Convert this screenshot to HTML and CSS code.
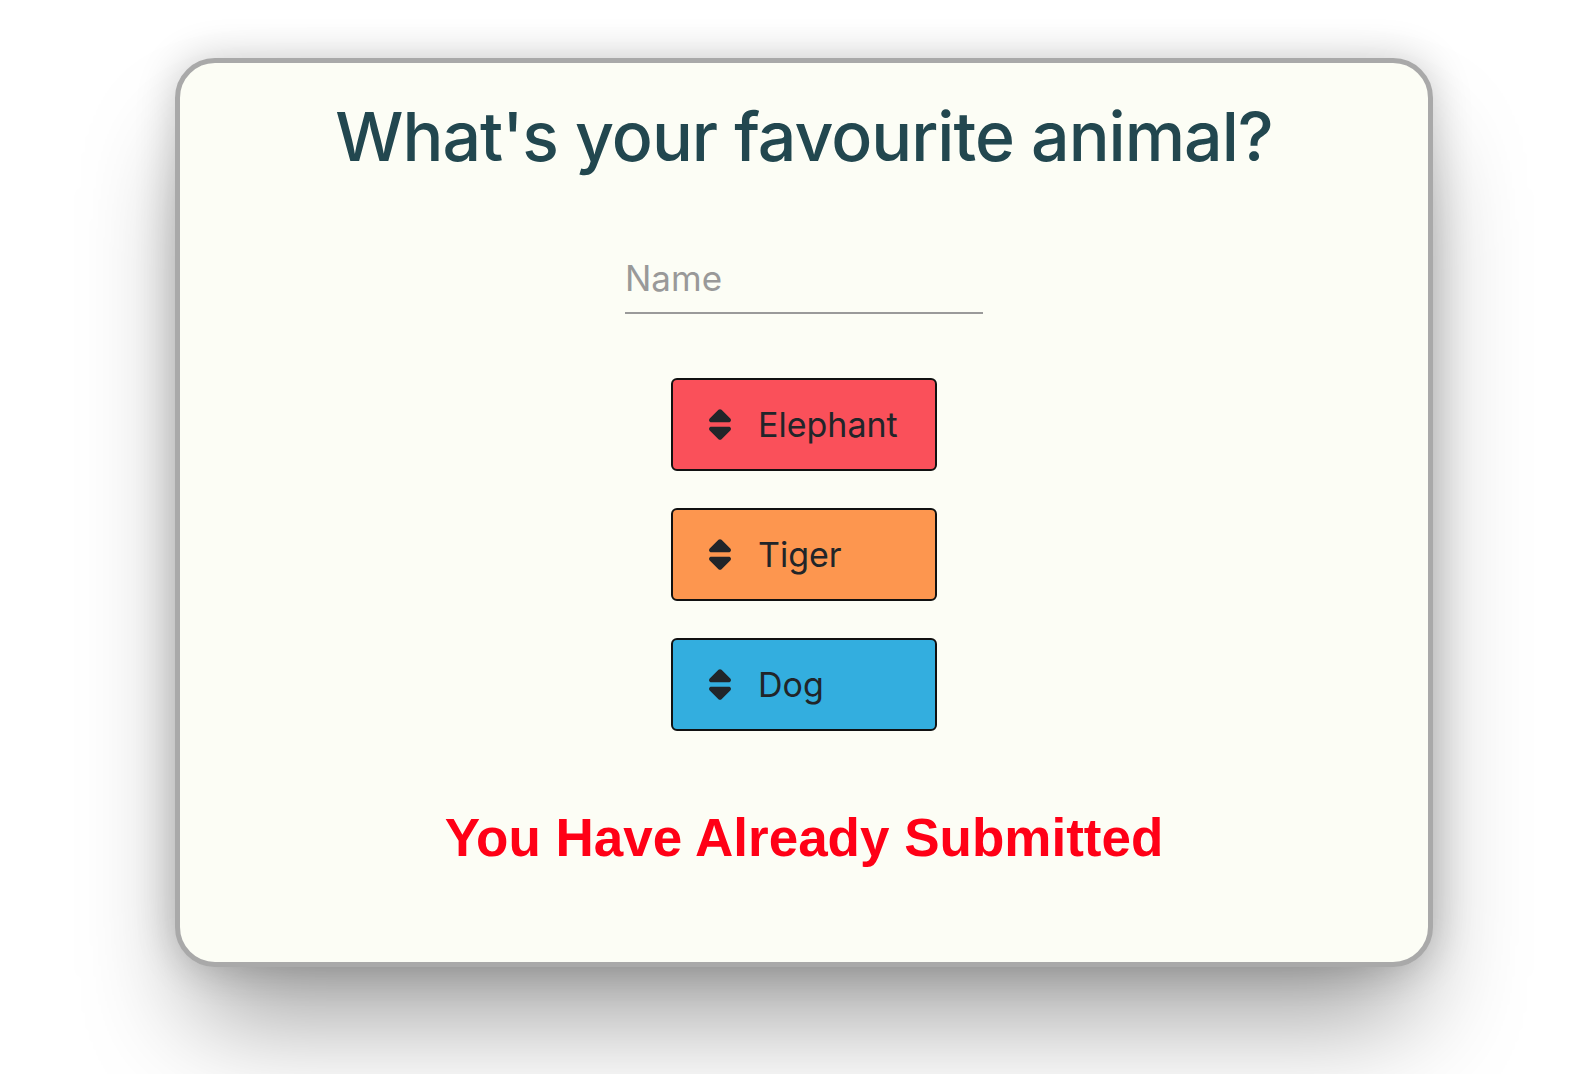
FILE: index.html
```html
<!DOCTYPE html>
<html lang="en">
<head>
<meta charset="utf-8">
<title>Favourite animal</title>
<link rel="stylesheet" href="styles.css">
</head>
<body>
<div class="page">
  <main class="card">
    <h1 class="title">What's your favourite animal?</h1>
    <input class="name-input" type="text" placeholder="Name">
    <div class="options">
      <button class="option option-elephant" type="button">
        <svg class="sort-icon" viewBox="0 0 320 512" aria-hidden="true"><path d="M137.4 41.4c12.5-12.5 32.8-12.5 45.3 0l128 128c9.2 9.2 11.9 22.9 6.9 34.9s-16.6 19.8-29.6 19.8H32c-12.9 0-24.6-7.8-29.6-19.8s-2.2-25.7 6.9-34.9l128-128zm0 429.3l-128-128c-9.2-9.2-11.9-22.9-6.9-34.9s16.6-19.8 29.6-19.8H288c12.9 0 24.6 7.8 29.6 19.8s2.2 25.7-6.9 34.9l-128 128c-12.5 12.5-32.8 12.5-45.3 0z"/></svg>
        <span class="option-label">Elephant</span>
      </button>
      <button class="option option-tiger" type="button">
        <svg class="sort-icon" viewBox="0 0 320 512" aria-hidden="true"><path d="M137.4 41.4c12.5-12.5 32.8-12.5 45.3 0l128 128c9.2 9.2 11.9 22.9 6.9 34.9s-16.6 19.8-29.6 19.8H32c-12.9 0-24.6-7.8-29.6-19.8s-2.2-25.7 6.9-34.9l128-128zm0 429.3l-128-128c-9.2-9.2-11.9-22.9-6.9-34.9s16.6-19.8 29.6-19.8H288c12.9 0 24.6 7.8 29.6 19.8s2.2 25.7-6.9 34.9l-128 128c-12.5 12.5-32.8 12.5-45.3 0z"/></svg>
        <span class="option-label">Tiger</span>
      </button>
      <button class="option option-dog" type="button">
        <svg class="sort-icon" viewBox="0 0 320 512" aria-hidden="true"><path d="M137.4 41.4c12.5-12.5 32.8-12.5 45.3 0l128 128c9.2 9.2 11.9 22.9 6.9 34.9s-16.6 19.8-29.6 19.8H32c-12.9 0-24.6-7.8-29.6-19.8s-2.2-25.7 6.9-34.9l128-128zm0 429.3l-128-128c-9.2-9.2-11.9-22.9-6.9-34.9s16.6-19.8 29.6-19.8H288c12.9 0 24.6 7.8 29.6 19.8s2.2 25.7-6.9 34.9l-128 128c-12.5 12.5-32.8 12.5-45.3 0z"/></svg>
        <span class="option-label">Dog</span>
      </button>
    </div>
    <p class="message">You Have Already Submitted</p>
  </main>
</div>
</body>
</html>
```
FILE: styles.css
```css
html, body {
  margin: 0;
  padding: 0;
  background: #ffffff;
}

.page {
  padding: 58px 145px 0 175px;
  height: 1074px;
  box-sizing: border-box;
  overflow: hidden;
}

.card {
  box-sizing: border-box;
  width: 1258px;
  background: #fcfdf5;
  border: 5px solid #a9a9a9;
  border-radius: 40px;
  box-shadow: 0 0 40px rgba(0, 0, 0, 0.2), 0 70px 110px -20px rgba(0, 0, 0, 0.38);
  padding: 33px 0 94px;
  display: flex;
  flex-direction: column;
  align-items: center;
  font-family: Inter, "Noto Sans", sans-serif;
}

.title {
  margin: 0;
  font-size: 68px;
  line-height: 80px;
  font-weight: 500;
  letter-spacing: -1px;
  color: #22474f;
  text-align: center;
}

.name-input {
  margin-top: 78px;
  width: 358px;
  height: 60px;
  box-sizing: border-box;
  padding: 0 0 10px 0;
  border: none;
  border-bottom: 2px solid #9a9a9a;
  background: transparent;
  font-family: Inter, "Noto Sans", sans-serif;
  font-size: 35px;
  color: #333;
  outline: none;
}

.name-input::placeholder {
  color: #999999;
}

.options {
  margin-top: 64px;
  display: flex;
  flex-direction: column;
  gap: 37px;
}

.option {
  box-sizing: border-box;
  width: 266px;
  height: 93px;
  border: 2px solid #111;
  border-radius: 6px;
  display: flex;
  align-items: center;
  gap: 27px;
  padding: 0 0 0 36px;
  font-family: Inter, "Noto Sans", sans-serif;
  font-size: 34px;
  color: #212529;
  cursor: pointer;
}

.option-elephant { background: #fa505a; }
.option-tiger { background: #fd964f; }
.option-dog { background: #33aedf; }

.sort-icon {
  width: 22px;
  height: 35px;
  fill: #212529;
  flex: none;
}

.option-label {
  line-height: 40px;
}

.message {
  margin: 77px 0 0;
  font-family: "Liberation Sans", Arial, sans-serif;
  font-weight: 700;
  font-size: 53px;
  line-height: 60px;
  color: #ff0016;
  text-align: center;
}
```
